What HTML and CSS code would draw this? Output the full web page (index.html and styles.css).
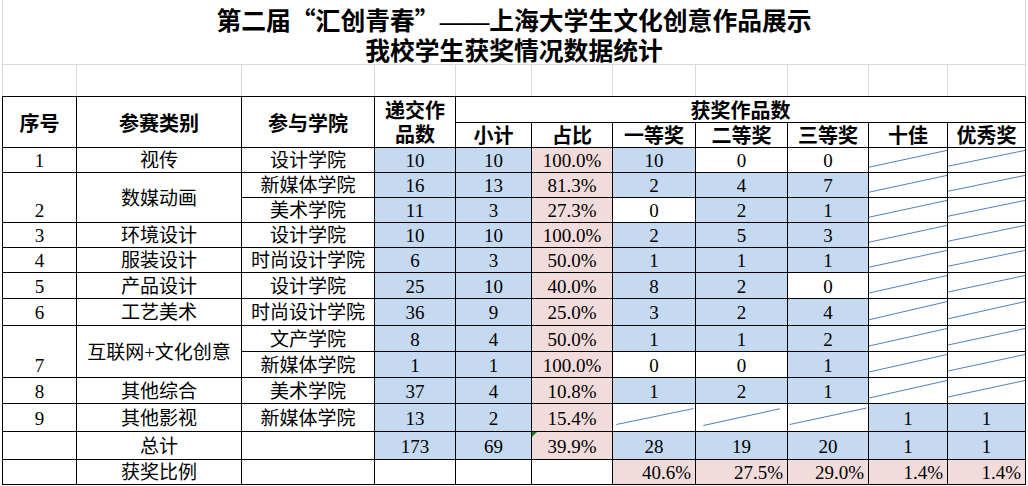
FILE: index.html
```html
<!DOCTYPE html>
<html lang="zh-CN">
<head>
<meta charset="utf-8">
<title>我校学生获奖情况数据统计</title>
<link rel="stylesheet" href="styles.css">
</head>
<body>
<div class="sheet">
  <div class="title">
    <div class="title-line">第二届<span class="fq">“</span>汇创青春<span class="fq">”</span>——上海大学生文化创意作品展示</div>
    <div class="title-line">我校学生获奖情况数据统计</div>
  </div>
  <table class="grid">
    <colgroup>
      <col class="w75"><col class="w165"><col class="w133"><col class="w81"><col class="w76"><col class="w81"><col class="w83"><col class="w92"><col class="w81"><col class="w79"><col class="w78">
    </colgroup>
    <tr class="spacer"><td class="first"></td><td></td><td></td><td></td><td></td><td></td><td></td><td></td><td></td><td></td><td></td></tr>
    <tr class="h26 head1">
      <th rowspan="2" class="first">序号</th>
      <th rowspan="2">参赛类别</th>
      <th rowspan="2">参与学院</th>
      <th rowspan="2" class="two">递交作<br>品数</th>
      <th colspan="7">获奖作品数</th>
    </tr>
    <tr class="h25">
      <th>小计</th><th>占比</th><th>一等奖</th><th>二等奖</th><th>三等奖</th><th>十佳</th><th>优秀奖</th>
    </tr>
    <tr class="h25">
      <td class="first">1</td><td>视传</td><td>设计学院</td>
      <td class="b">10</td><td class="b">10</td><td class="p">100.0%</td>
      <td class="b">10</td><td>0</td><td>0</td>
      <td class="dg"><svg class="diag" viewBox="0 0 100 100" preserveAspectRatio="none"><line x1="0" y1="80" x2="100" y2="10"/></svg></td>
      <td class="dg"><svg class="diag" viewBox="0 0 100 100" preserveAspectRatio="none"><line x1="0" y1="76" x2="100" y2="10"/></svg></td>
    </tr>
    <tr class="h25">
      <td class="first bot" rowspan="2">2</td><td rowspan="2">数媒动画</td><td>新媒体学院</td>
      <td class="b">16</td><td class="b">13</td><td class="p">81.3%</td>
      <td class="b">2</td><td class="b">4</td><td class="b">7</td>
      <td class="dg"><svg class="diag" viewBox="0 0 100 100" preserveAspectRatio="none"><line x1="0" y1="80" x2="100" y2="10"/></svg></td>
      <td class="dg"><svg class="diag" viewBox="0 0 100 100" preserveAspectRatio="none"><line x1="0" y1="76" x2="100" y2="10"/></svg></td>
    </tr>
    <tr class="h25">
      <td>美术学院</td>
      <td class="b">11</td><td class="b">3</td><td class="p">27.3%</td>
      <td>0</td><td class="b">2</td><td class="b">1</td>
      <td class="dg"><svg class="diag" viewBox="0 0 100 100" preserveAspectRatio="none"><line x1="0" y1="80" x2="100" y2="10"/></svg></td>
      <td class="dg"><svg class="diag" viewBox="0 0 100 100" preserveAspectRatio="none"><line x1="0" y1="76" x2="100" y2="10"/></svg></td>
    </tr>
    <tr class="h25">
      <td class="first">3</td><td>环境设计</td><td>设计学院</td>
      <td class="b">10</td><td class="b">10</td><td class="p">100.0%</td>
      <td class="b">2</td><td class="b">5</td><td class="b">3</td>
      <td class="dg"><svg class="diag" viewBox="0 0 100 100" preserveAspectRatio="none"><line x1="0" y1="80" x2="100" y2="10"/></svg></td>
      <td class="dg"><svg class="diag" viewBox="0 0 100 100" preserveAspectRatio="none"><line x1="0" y1="76" x2="100" y2="10"/></svg></td>
    </tr>
    <tr class="h25">
      <td class="first">4</td><td>服装设计</td><td>时尚设计学院</td>
      <td class="b">6</td><td class="b">3</td><td class="p">50.0%</td>
      <td class="b">1</td><td class="b">1</td><td class="b">1</td>
      <td class="dg"><svg class="diag" viewBox="0 0 100 100" preserveAspectRatio="none"><line x1="0" y1="80" x2="100" y2="10"/></svg></td>
      <td class="dg"><svg class="diag" viewBox="0 0 100 100" preserveAspectRatio="none"><line x1="0" y1="76" x2="100" y2="10"/></svg></td>
    </tr>
    <tr class="h26">
      <td class="first">5</td><td>产品设计</td><td>设计学院</td>
      <td class="b">25</td><td class="b">10</td><td class="p">40.0%</td>
      <td class="b">8</td><td class="b">2</td><td>0</td>
      <td class="dg"><svg class="diag" viewBox="0 0 100 100" preserveAspectRatio="none"><line x1="0" y1="80" x2="100" y2="10"/></svg></td>
      <td class="dg"><svg class="diag" viewBox="0 0 100 100" preserveAspectRatio="none"><line x1="0" y1="76" x2="100" y2="10"/></svg></td>
    </tr>
    <tr class="h27">
      <td class="first">6</td><td>工艺美术</td><td>时尚设计学院</td>
      <td class="b">36</td><td class="b">9</td><td class="p">25.0%</td>
      <td class="b">3</td><td class="b">2</td><td class="b">4</td>
      <td class="dg"><svg class="diag" viewBox="0 0 100 100" preserveAspectRatio="none"><line x1="0" y1="80" x2="100" y2="10"/></svg></td>
      <td class="dg"><svg class="diag" viewBox="0 0 100 100" preserveAspectRatio="none"><line x1="0" y1="76" x2="100" y2="10"/></svg></td>
    </tr>
    <tr class="h26">
      <td class="first bot" rowspan="2">7</td><td rowspan="2">互联网+文化创意</td><td>文产学院</td>
      <td class="b">8</td><td class="b">4</td><td class="p">50.0%</td>
      <td class="b">1</td><td class="b">1</td><td class="b">2</td>
      <td class="dg"><svg class="diag" viewBox="0 0 100 100" preserveAspectRatio="none"><line x1="0" y1="80" x2="100" y2="10"/></svg></td>
      <td class="dg"><svg class="diag" viewBox="0 0 100 100" preserveAspectRatio="none"><line x1="0" y1="76" x2="100" y2="10"/></svg></td>
    </tr>
    <tr class="h26">
      <td>新媒体学院</td>
      <td class="b">1</td><td class="b">1</td><td class="p">100.0%</td>
      <td>0</td><td>0</td><td class="b">1</td>
      <td class="dg"><svg class="diag" viewBox="0 0 100 100" preserveAspectRatio="none"><line x1="0" y1="80" x2="100" y2="10"/></svg></td>
      <td class="dg"><svg class="diag" viewBox="0 0 100 100" preserveAspectRatio="none"><line x1="0" y1="76" x2="100" y2="10"/></svg></td>
    </tr>
    <tr class="h26">
      <td class="first">8</td><td>其他综合</td><td>美术学院</td>
      <td class="b">37</td><td class="b">4</td><td class="p">10.8%</td>
      <td class="b">1</td><td class="b">2</td><td class="b">1</td>
      <td class="dg"><svg class="diag" viewBox="0 0 100 100" preserveAspectRatio="none"><line x1="0" y1="80" x2="100" y2="10"/></svg></td>
      <td class="dg"><svg class="diag" viewBox="0 0 100 100" preserveAspectRatio="none"><line x1="0" y1="76" x2="100" y2="10"/></svg></td>
    </tr>
    <tr class="h28">
      <td class="first">9</td><td>其他影视</td><td>新媒体学院</td>
      <td class="b">13</td><td class="b">2</td><td class="p">15.4%</td>
      <td class="dg"><svg class="diag" viewBox="0 0 100 100" preserveAspectRatio="none"><line x1="4" y1="76" x2="98" y2="17"/></svg></td>
      <td class="dg"><svg class="diag" viewBox="0 0 100 100" preserveAspectRatio="none"><line x1="8" y1="80" x2="92" y2="18"/></svg></td>
      <td class="dg"><svg class="diag" viewBox="0 0 100 100" preserveAspectRatio="none"><line x1="2" y1="76" x2="98" y2="15"/></svg></td>
      <td class="b">1</td><td class="b">1</td>
    </tr>
    <tr class="h28">
      <td class="first"></td><td>总计</td><td></td>
      <td class="b">173</td><td class="b">69</td><td class="p flag">39.9%</td>
      <td class="b">28</td><td class="b">19</td><td class="b">20</td>
      <td class="b">1</td><td class="b">1</td>
    </tr>
    <tr class="h25">
      <td class="first"></td><td>获奖比例</td><td></td>
      <td></td><td></td><td></td>
      <td class="p r">40.6%</td><td class="p r">27.5%</td><td class="p r">29.0%</td>
      <td class="p r">1.4%</td><td class="p r">1.4%</td>
    </tr>
  </table>
</div>
</body>
</html>
```

FILE: styles.css
```css
* { box-sizing: border-box; }
html, body { margin: 0; padding: 0; background: #fff; }
body {
  font-family: "Liberation Serif", "Noto Sans CJK SC", serif;
  color: #000;
}
.sheet { width: 1024px; margin-left: 2px; }

.title {
  height: 65px;
  border-left: 1px solid #d9d9d9;
  border-right: 1px solid #d9d9d9;
  border-bottom: 1px solid #d9d9d9;
  padding-top: 7px;
  text-align: center;
  font-family: "Liberation Serif", "Noto Sans CJK SC", serif;
  font-weight: 700;
  font-size: 24.8px;
  line-height: 30px;
}
.title .fq {
  font-family: "Noto Sans CJK SC", sans-serif;
  line-height: 20px;
}

.grid {
  border-collapse: separate;
  border-spacing: 0;
  table-layout: fixed;
  width: 1024px;
  font-size: 19px;
}
.w75 { width: 75px; }
.w165 { width: 165px; }
.w133 { width: 133px; }
.w81 { width: 81px; }
.w76 { width: 76px; }
.w83 { width: 83px; }
.w92 { width: 92px; }
.w79 { width: 79px; }
.w78 { width: 78px; }

.grid td, .grid th {
  padding: 2px 0 0 0;
  border-right: 1px solid #000;
  border-bottom: 1px solid #000;
  text-align: center;
  vertical-align: middle;
  line-height: 20px;
  white-space: nowrap;
  font-weight: 400;
}
.grid th {
  padding-top: 3px;
  font-family: "Liberation Serif", "Noto Sans CJK SC", serif;
  font-weight: 700;
  font-size: 20px;
}
.grid .first { border-left: 1px solid #000; }

.spacer { height: 31px; }
.spacer td {
  border-right-color: #d9d9d9;
  border-bottom: none;
}
.spacer td.first { border-left-color: #d9d9d9; }

.head1 th { border-top: 1px solid #000; }
.grid th.two { line-height: 24px; padding-top: 2px; }

.h25 { height: 25px; }
.h26 { height: 26px; }
.h27 { height: 27px; }
.h28 { height: 28px; }

.grid .b { background: #c5d9f1; }
.grid .p { background: #f2dcdb; }
.grid .r { text-align: right; padding-right: 4px; }
.grid .bot { vertical-align: bottom; padding-bottom: 1px; }

.grid .dg { position: relative; }
.diag {
  position: absolute;
  left: 0;
  top: 0;
  width: 100%;
  height: 100%;
  display: block;
}
.diag line {
  stroke: #4f81bd;
  stroke-width: 1;
  vector-effect: non-scaling-stroke;
}

.grid .flag { position: relative; }
.grid .flag::before {
  content: "";
  position: absolute;
  left: 0;
  top: 0;
  width: 0;
  height: 0;
  border-style: solid;
  border-width: 5px 5px 0 0;
  border-color: #1f7a1f transparent transparent transparent;
}
```
